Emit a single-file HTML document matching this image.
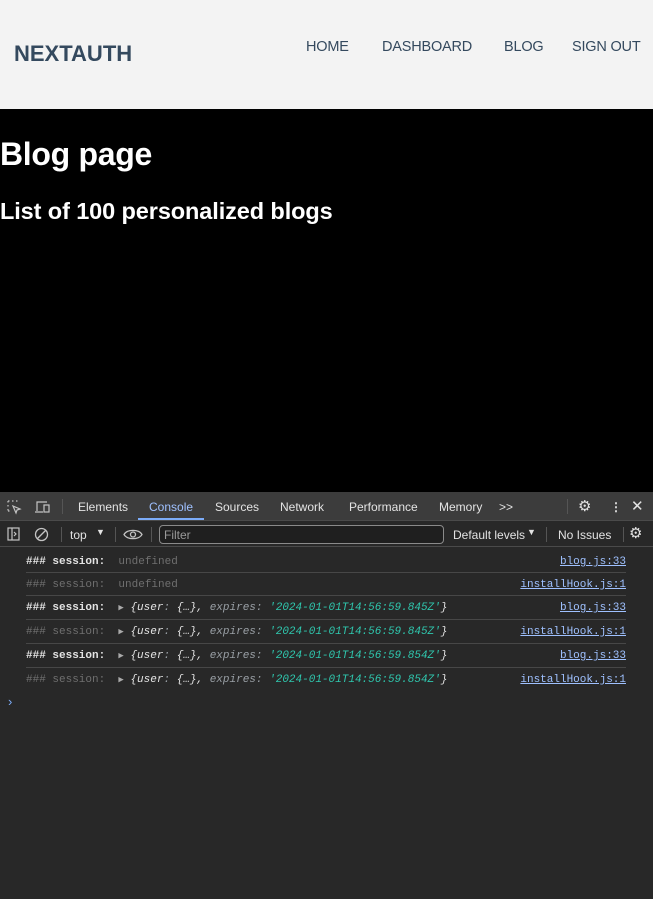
<!DOCTYPE html>
<html><head><meta charset="utf-8"><style>
*{margin:0;padding:0;box-sizing:border-box}
body{width:653px;height:899px;overflow:hidden;background:#000;font-family:"Liberation Sans",sans-serif;position:relative}
.hdr{position:absolute;left:0;top:0;width:653px;height:109px;background:#f3f3f3}
.logo{position:absolute;left:14px;top:41px;font-size:22px;font-weight:bold;color:#34495e}
.nav{position:absolute;top:39px;font-size:14.5px;color:#34495e;letter-spacing:-0.2px}
h1{position:absolute;left:0;top:136px;color:#fff;font-size:32px;font-weight:bold;letter-spacing:-0.3px}
h2{position:absolute;left:0;top:198px;color:#fff;font-size:23.5px;font-weight:bold;letter-spacing:-0.1px}
.dt{position:absolute;left:0;top:492px;width:653px;height:407px;background:#282828}
.tb{position:absolute;left:0;top:0;width:653px;height:29px;background:#3c3c3c;border-bottom:1px solid #4a4a4a}
.t{position:absolute;top:8px;font-size:12px;color:#e3e3e3}
.cb{position:absolute;left:0;top:29px;width:653px;height:26px;background:#282828;border-bottom:1px solid #4a4a4a}
.sep{position:absolute;width:1px;background:#555}
.row{position:absolute;left:26px;width:600px;height:24px;font-family:"Liberation Mono",monospace;font-size:11px;line-height:24px;color:#e3e3e3;border-bottom:1px solid #474747}
.row .r{position:absolute;right:0;top:0;color:#9fc1ff;text-decoration:underline}
.dim{color:#6f6f6f}
.k{color:#9aa0a6;font-style:italic}
.s{color:#2fc7ae;font-style:italic}
.i{font-style:italic;color:#e3e3e3}
</style></head><body>
<div class="hdr">
<div class="logo">NEXTAUTH</div>
<div class="nav" style="left:306px">HOME</div>
<div class="nav" style="left:382px">DASHBOARD</div>
<div class="nav" style="left:504px">BLOG</div>
<div class="nav" style="left:572px">SIGN OUT</div>
</div>
<h1>Blog page</h1>
<h2>List of 100 personalized blogs</h2>
<div class="dt">
<div class="tb">
<svg style="position:absolute;left:6px;top:7px" width="16" height="16" viewBox="0 0 16 16" fill="none" stroke="#c4c4c4" stroke-width="1.2"><path d="M2 2h2M6 2h2M10 2h2M2 2v2M2 6v2M2 10v2M2 12h2" stroke-dasharray="1.5 1"/><path d="M7 7l7 3-3 1-1 3z"/></svg>
<svg style="position:absolute;left:34px;top:7px" width="18" height="16" viewBox="0 0 18 16" fill="none" stroke="#c4c4c4" stroke-width="1.2"><path d="M3 12V3h10M1 13h8"/><rect x="10" y="6" width="5" height="7"/></svg>
<div class="sep" style="left:62px;top:7px;height:15px"></div>
<div class="t" style="left:78px">Elements</div>
<div class="t" style="left:149px;color:#9fc1ff">Console</div>
<div style="position:absolute;left:138px;top:26px;width:66px;height:2px;background:#7cacf8"></div>
<div class="t" style="left:215px">Sources</div>
<div class="t" style="left:280px">Network</div>
<div class="t" style="left:349px">Performance</div>
<div class="t" style="left:439px">Memory</div>
<div class="t" style="left:499px">&gt;&gt;</div>
<div class="sep" style="left:567px;top:7px;height:15px"></div>
<div class="t" style="left:578px;font-size:15px;top:5px">⚙</div>
<div class="t" style="left:610px;font-weight:bold">⋮</div>
<div class="t" style="left:631px;font-size:15px;top:5px">✕</div>
</div>
<div class="cb">
<svg style="position:absolute;left:7px;top:6px" width="14" height="14" viewBox="0 0 14 14" fill="none" stroke="#c4c4c4" stroke-width="1.2"><rect x="1" y="1" width="11" height="12"/><path d="M5 1v12M7 5l2 2-2 2"/></svg>
<svg style="position:absolute;left:34px;top:6px" width="15" height="15" viewBox="0 0 15 15" fill="none" stroke="#c4c4c4" stroke-width="1.3"><circle cx="7.5" cy="7.5" r="6"/><path d="M3.5 11.5l8-8"/></svg>
<div class="sep" style="left:61px;top:6px;height:15px"></div>
<div class="t" style="left:70px;top:7px">top</div>
<div class="t" style="left:96px;top:6px;font-size:9px">▼</div>
<div class="sep" style="left:115px;top:6px;height:15px"></div>
<svg style="position:absolute;left:123px;top:7px" width="20" height="13" viewBox="0 0 20 13" fill="none" stroke="#c4c4c4" stroke-width="1.3"><path d="M1 6.5C4 1 16 1 19 6.5C16 12 4 12 1 6.5z"/><circle cx="10" cy="6.5" r="2.5"/></svg>
<div class="sep" style="left:151px;top:6px;height:15px"></div>
<div style="position:absolute;left:159px;top:4px;width:285px;height:19px;border:1px solid #8a8a8a;border-radius:4px;background:#1f1f1f"><span style="position:absolute;left:4px;top:2px;font-size:12px;color:#9a9a9a">Filter</span></div>
<div class="t" style="left:453px;top:7px">Default levels</div>
<div class="t" style="left:527px;top:6px;font-size:9px">▼</div>
<div class="sep" style="left:546px;top:6px;height:15px"></div>
<div class="t" style="left:558px;top:7px">No Issues</div>
<div class="sep" style="left:623px;top:6px;height:15px"></div>
<div class="t" style="left:629px;top:3px;font-size:15px">⚙</div>
</div>
<div class="row" style="top:58px;height:23px"><b>### session:</b>&nbsp; <span class="dim">undefined</span><span class="r">blog.js:33</span></div>
<div class="row" style="top:81px;height:23px"><span class="dim">### session:&nbsp; undefined</span><span class="r">installHook.js:1</span></div>
<div class="row" style="top:104px"><b>### session:</b>&nbsp; <span style="color:#aaa;font-size:9px">▶</span> <span class="i">{user</span><span class="k">:</span> <span class="i">{…},</span> <span class="k">expires:</span> <span class="s">'2024-01-01T14:56:59.845Z'</span><span class="i">}</span><span class="r">blog.js:33</span></div>
<div class="row" style="top:128px"><span class="dim">### session:</span>&nbsp; <span style="color:#aaa;font-size:9px">▶</span> <span class="i">{user</span><span class="k">:</span> <span class="i">{…},</span> <span class="k">expires:</span> <span class="s">'2024-01-01T14:56:59.845Z'</span><span class="i">}</span><span class="r">installHook.js:1</span></div>
<div class="row" style="top:152px"><b>### session:</b>&nbsp; <span style="color:#aaa;font-size:9px">▶</span> <span class="i">{user</span><span class="k">:</span> <span class="i">{…},</span> <span class="k">expires:</span> <span class="s">'2024-01-01T14:56:59.854Z'</span><span class="i">}</span><span class="r">blog.js:33</span></div>
<div class="row" style="top:176px;border-bottom:none"><span class="dim">### session:</span>&nbsp; <span style="color:#aaa;font-size:9px">▶</span> <span class="i">{user</span><span class="k">:</span> <span class="i">{…},</span> <span class="k">expires:</span> <span class="s">'2024-01-01T14:56:59.854Z'</span><span class="i">}</span><span class="r">installHook.js:1</span></div>
<div style="position:absolute;left:8px;top:202px;color:#7cacf8;font-size:13px">›</div>
</div>
</body></html>
